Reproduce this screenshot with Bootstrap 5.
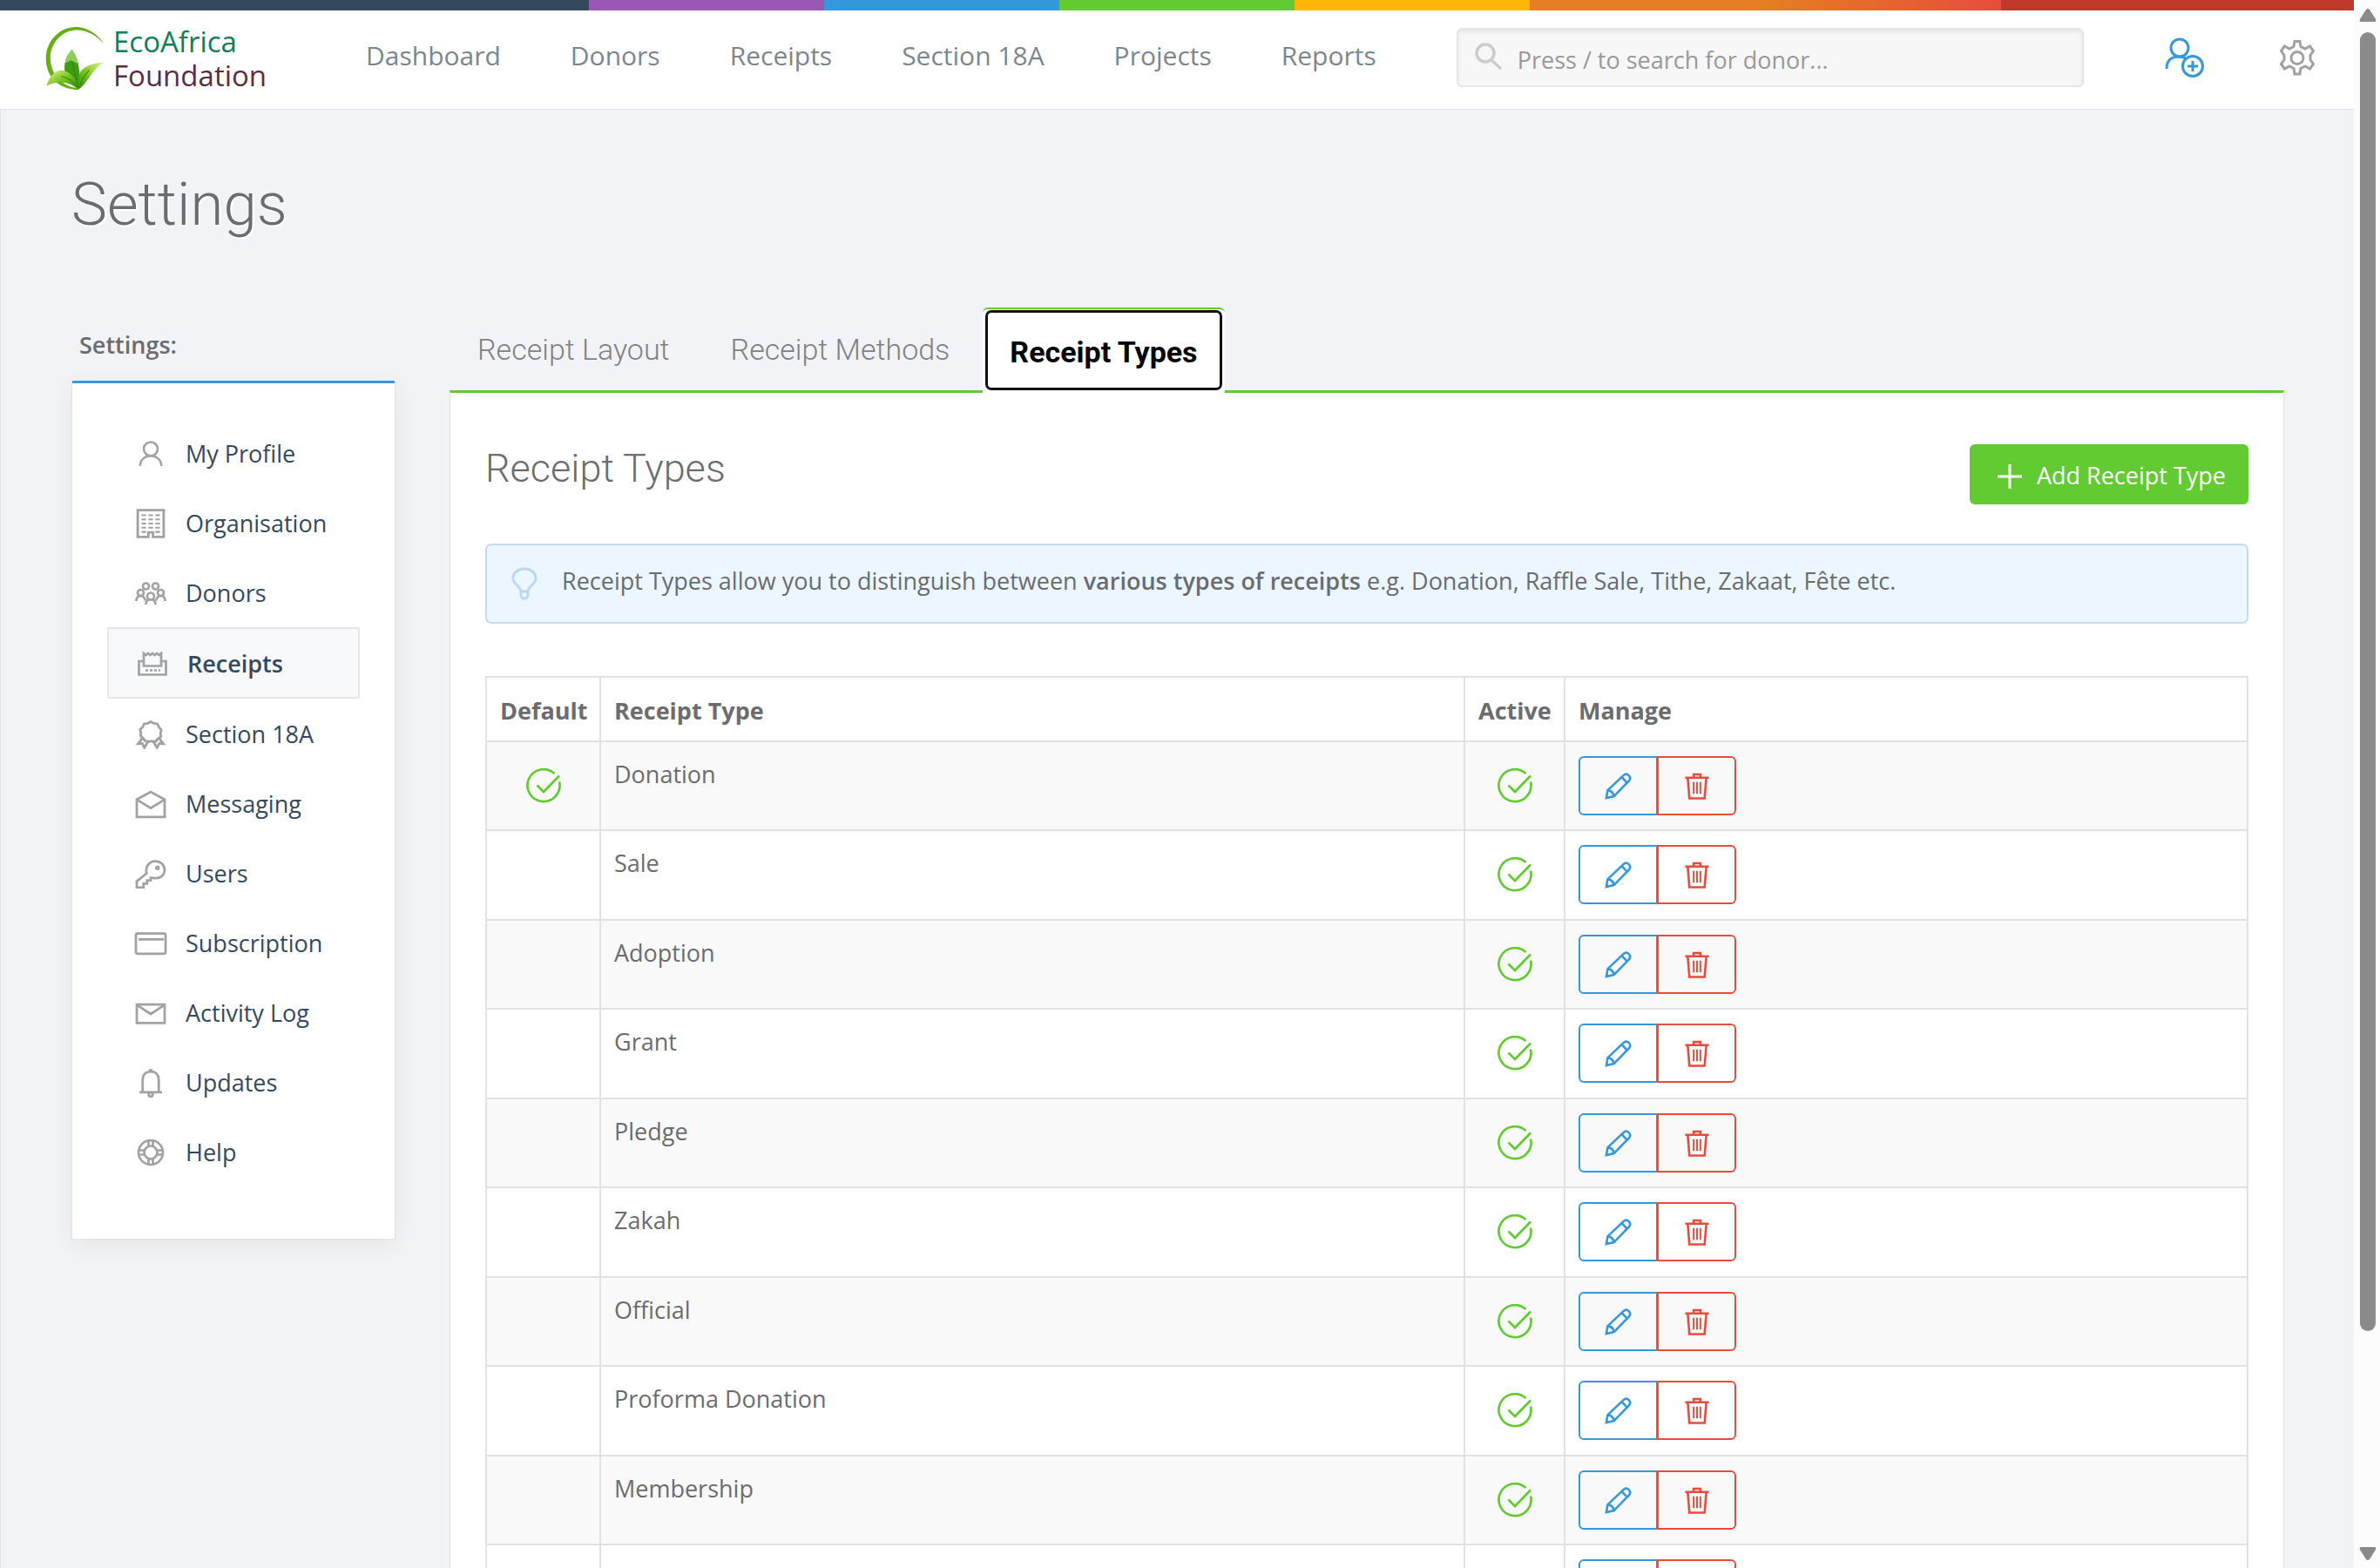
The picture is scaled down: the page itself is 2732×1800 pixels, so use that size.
<!DOCTYPE html>
<html lang="en">
<head>
<meta charset="utf-8">
<meta name="viewport" content="width=device-width, initial-scale=1">
<title>Settings - Receipt Types</title>
<link rel="stylesheet" href="https://cdn.jsdelivr.net/npm/bootstrap@5.3.0/dist/css/bootstrap.min.css">
<style>
:root{--ink:#6a6c6f;--navy:#34495e;--blue:#3498db;--green:#62cb31;--red:#e74c3c;--rule:#e3e4e5}
body{font-family:"Open Sans","Noto Sans",sans-serif;font-size:27px;line-height:40px;color:var(--ink);background:#f1f3f6}
.app{height:100vh;overflow:hidden;padding-right:30px}
.stripe{height:12px;background:linear-gradient(90deg,#34495e 25%,#9b59b6 25% 35%,#3498db 35% 45%,#62cb31 45% 55%,#ffb606 55% 65%,#e67e22 65% 75%,#e74c3c 85%,#c0392b 85%)}
.topbar{height:114px;background:#fff;border-bottom:1px solid #e1e2e3;padding:0 44px 0 52px}
.brand{font-size:33px;line-height:39px;color:#0d8058;width:328px;padding-top:16px;gap:10px}
.brand span{color:#5a2d45}
.brand svg{margin-top:2px}
.mainnav .nav-link{font-size:30px;line-height:40px;padding:32px 40px;color:#7c868f}
.finder{width:720px;height:68px;margin:20px 0 0 52px}
.finder .form-control{height:68px;font-size:27px;padding:4px 20px 0 68px;background:#f7f7f7;border:2px solid #e5e6e7;border-radius:6px;box-shadow:inset 0 3px 4px rgba(0,0,0,.07);color:var(--ink)}
.finder .form-control::placeholder{color:#999;opacity:1}
.finder svg{top:16px;left:20px}
.tools{gap:84px;padding-top:31px}
.page{border-left:1px solid #e1e3e6;padding:61px 80px 0 81px}
.page h1{font-family:Roboto,sans-serif;font-weight:300;font-size:69px;line-height:96px;margin-bottom:70px;text-shadow:2px 2px 0 #fff}
.cols{gap:62px}
.side{width:372px;flex:none;padding-top:23px}
.side h2{font-size:27px;line-height:40px;font-weight:600;margin:0 0 21px 9px}
.sidecard{background:#fff;border:1px solid var(--rule);border-top:3px solid var(--blue);border-radius:3px;padding:40px 40px 60px;box-shadow:0 6px 24px rgba(60,70,90,.07)}
.sidecard .nav-link{height:80px;padding:2px 0 0 31px;color:var(--navy);gap:21px}
.sidecard .nav-link.active{height:82px;border:2px solid #e5e6e7;background:#f7f9fa;font-weight:600;border-radius:2px}
.sidecard svg{color:#a2a2a2}
.tabs{gap:6px;position:relative;z-index:1;margin-bottom:-3px;height:98px}
.tabs .nav-link{font-family:Roboto,sans-serif;font-weight:300;font-size:34px;line-height:40px;color:#808184;padding:28px 32px}
.tabs .nav-link.active{color:#000;font-weight:700;background:#fff;border-top:2px solid var(--green);border-radius:6px 6px 0 0;padding:29px 31px;height:98px;position:relative}
.tabs .nav-link.active::after{content:"";position:absolute;inset:1px 3px 3px;border:3px solid #111;border-radius:7px}
.panel{background:#fff;border:1px solid #e4e5e7;border-top:3px solid var(--green);padding:59px 40px 80px}
.panel h2{font-family:Roboto,sans-serif;font-weight:300;font-size:45px;line-height:56px}
.addbtn{height:69px;font-size:27px;background:var(--green);color:#fff;border-radius:6px;padding:4px 25px 0 30px;gap:16px}
.note{margin:45px 0 60px;height:92px;background:#ebf6ff;border:2px solid #c5dbee;border-radius:7px;padding:0 24px 0 28px;gap:28px}
.note p{padding-bottom:6px}
.note strong{font-weight:600}
.types{table-layout:fixed;border:2px solid #e2e2e2;color:var(--ink);margin:0;--bs-table-color:var(--ink);--bs-table-striped-color:var(--ink);--bs-table-striped-bg:#f9f9f9;--bs-table-bg:#fff}
.types th,.types td{border:2px solid #e2e2e2;color:var(--ink);padding:16px 15px}
.types th{font-weight:700;padding:18px 15px 14px}
.types td{height:102px}
.types tr:nth-child(even) td{height:103px}
.types td:nth-child(2){padding-top:17px}
.types thead tr th:nth-child(1),.types td:nth-child(1),.types td:nth-child(3){text-align:center}
.types svg.tick{margin-top:14px;color:var(--green)}
.types .btn{width:91px;height:68px;border-radius:6px;border-width:2px;padding:0}
.c1{width:131px}.c3{width:115px}.c4{width:784px}
.btn-edit{--bs-btn-color:#3498db;--bs-btn-border-color:#3498db}
.btn-del{--bs-btn-color:#e74c3c;--bs-btn-border-color:#e74c3c}
svg{display:block;flex:none}
.ln{fill:none;stroke:currentColor;stroke-width:2.7}
.scroller{width:30px;background:#fcfcfc;padding:10px 5px 9px 6px}
.scroller i{width:18px;height:83.7%;margin:12px 0 auto;background:#8a8a8a;border-radius:9px}
</style>
<script src="https://cdn.jsdelivr.net/npm/bootstrap@5.3.0/dist/js/bootstrap.bundle.min.js"></script>
</head>
<body>
<svg class="d-none" aria-hidden="true">
  <symbol id="user" viewBox="0 0 32 32"><g class="ln"><circle cx="16" cy="10" r="8.500"/><path d="M3 31C3 23 9 18.500 16 18.500S29 23 29 31"/></g></symbol>
  <symbol id="building" viewBox="0 0 32 32"><g class="ln"><path d="M2 1.500h28v29H18.500v-5h-5v5H2z"/><path d="M6 7h5m2.500 0h5m2.500 0h5M6 11.500h5m2.500 0h5m2.500 0h5M6 16h5m2.500 0h5m2.500 0h5M6 20.500h5m2.500 0h5m2.500 0h5M6 25h5m10 0h5" stroke-width="2"/></g></symbol>
  <symbol id="group" viewBox="0 0 36 32"><g class="ln"><circle cx="12.500" cy="8" r="3.500"/><circle cx="23.500" cy="8" r="3.500"/><circle cx="6.500" cy="15.500" r="3.500"/><circle cx="29.500" cy="15.500" r="3.500"/><circle cx="18" cy="19.500" r="4"/><path d="M1.500 25c0-4 2-6 5-6s4.500 2 5.500 5.500M34.500 25c0-4-2-6-5-6s-4.500 2-5.500 5.500M12.500 29c0-4 2-6 5.500-6s5.500 2 5.500 6"/></g></symbol>
  <symbol id="printer" viewBox="0 0 34 32"><g class="ln"><path d="M7 13H1.500v15.500h31V13H27"/><path d="M7 18.500V4l2.500 2L12 4l2.500 2L17 4l2.500 2L22 4l2.500 2L27 4v14.500z"/><path d="M9 23.500h17" stroke-dasharray="3 2"/></g></symbol>
  <symbol id="ribbon" viewBox="0 0 32 32"><g class="ln"><path d="m16 1.500 3.500 1.700 4 .6 1.600 3.700 2.700 3-.9 3.800.4 4-3.300 2.200-2.500 3-4-.3-3.500.3-4-.6-2.500-3-2.700-2.600.3-3.700-.9-3.500L7 7.500l1.600-3.700 4-.6z"/><path d="m6.500 20-4.500 6 4.500-.4L9 30.500l4-7m12.500-3.500 4.500 6-4.500-.4-2.500 4.900-4-7"/></g></symbol>
  <symbol id="mailopen" viewBox="0 0 34 32"><g class="ln"><path d="M1.500 10.500 17 2l15.500 8.500v19.500h-31z"/><path d="M1.500 10.500 17 20l15.500-9.500"/></g></symbol>
  <symbol id="key" viewBox="0 0 34 32"><g class="ln"><path d="M12.500 15C10.500 7 16 1.500 22 1.500c6 0 10.500 4.500 10.500 10C32.500 18 26 22 19 20h-2v3h-4v3.500H9V31H1.500v-7z"/><circle cx="24.500" cy="9" r="1.300"/></g></symbol>
  <symbol id="cardpay" viewBox="0 0 36 32"><g class="ln"><rect x="1.500" y="4.500" width="33" height="22.500" rx="2"/><path d="M4.500 11h28"/></g></symbol>
  <symbol id="mail" viewBox="0 0 34 32"><g class="ln"><path d="M1.500 6h31v20.500h-31z"/><path d="m1.500 6.500 15.500 10 15.500-10"/></g></symbol>
  <symbol id="bell" viewBox="0 0 32 32"><g class="ln"><path d="M3.500 26h25M7 26V12.500C7 6.500 10.500 3 16 3s9 3.500 9 9.500V26"/><circle cx="16" cy="28.500" r="2.300"/><path d="M14 1.500h4"/></g></symbol>
  <symbol id="ring" viewBox="0 0 32 32"><g class="ln"><circle cx="16" cy="16" r="14"/><circle cx="16" cy="16" r="7.500"/><path d="M13.500 2v7m5-7v7m-5 14v7m5-7v7M2 13.500h7m-7 5h7m14-5h7m-7 5h7"/></g></symbol>
  <symbol id="tick" viewBox="0 0 40 40"><g class="ln"><path d="M32.500 6A18.500 18.500 0 1 0 38 15.500"/><path d="M12.500 19.500 20 27 38 8.500"/></g></symbol>
  <symbol id="pencil" viewBox="0 0 32 32"><g class="ln"><path d="m2 30 1.500-9L22.500 3c4-3.500 10 2 6.500 6.500L11 28z"/><path d="m20.500 5.500 6.500 7M4 21c4 .5 6.500 3 7 7"/></g></symbol>
  <symbol id="trash" viewBox="0 0 28 32"><g class="ln"><path d="M0 6h28M3 6l2 24.500h18L25 6M10 6V2h8v4"/><path d="M10 11v14m4-14v14m4-14v14" stroke-width="2"/></g></symbol>
</svg>

<div class="app">
  <div class="stripe"></div>
  <header class="topbar d-flex align-items-start">
    <a class="brand d-flex text-decoration-none" href="#">
      <svg width="68" height="75" viewBox="36 30 201 222" aria-hidden="true">
        <defs><linearGradient id="lf" x1="0" y1="0" x2="1" y2="1"><stop offset="0" stop-color="#e6f5a0"/><stop offset=".5" stop-color="#79c41c"/><stop offset="1" stop-color="#2f8a08"/></linearGradient>
        <linearGradient id="rf" x1="1" y1="0" x2="0" y2="1"><stop offset="0" stop-color="#e9f6a8"/><stop offset=".5" stop-color="#83cc1f"/><stop offset="1" stop-color="#2f8a08"/></linearGradient></defs>
        <path fill="#63b010" d="M235 90C205 45 165 33 140 33C85 33 38 80 38 140C38 200 80 246 150 246L150 240C100 238 55 200 53 140C52 90 90 45 140 43C175 42 210 60 235 90Z"/>
        <path fill="#3f9c12" d="M126 110C98 140 96 178 108 205L148 242C156 200 154 145 126 110Z"/>
        <path fill="#8fce5a" d="M126 110C112 126 105 140 103 156L124 146L147 158C144 138 136 122 126 110Z"/>
        <path fill="url(#rf)" d="M236 153C190 155 152 172 148 206L150 244C180 226 190 180 236 153Z"/>
        <path fill="url(#lf)" d="M40 233C52 190 80 174 100 182C128 190 142 215 148 244C122 222 80 210 40 233Z"/>
        <path fill="none" stroke="#2f8a08" stroke-width="3" d="M126 150Q140 200 149 240M185 180Q160 205 150 240M90 200Q130 210 148 240"/>
      </svg>
      <div>EcoAfrica<br><span>Foundation</span></div>
    </a>
    <nav class="mainnav nav flex-nowrap" aria-label="Main">
      <a class="nav-link" href="#">Dashboard</a><a class="nav-link" href="#">Donors</a><a class="nav-link" href="#">Receipts</a><a class="nav-link text-nowrap" href="#">Section 18A</a><a class="nav-link" href="#">Projects</a><a class="nav-link" href="#">Reports</a>
    </nav>
    <form class="finder position-relative">
      <input class="form-control" type="text" aria-label="Search for donor" placeholder="Press / to search for donor...">
      <svg class="position-absolute" width="34" height="34" viewBox="0 0 34 34" fill="none" stroke="#ccc" stroke-width="3.500" aria-hidden="true"><circle cx="13" cy="13" r="10"/><path d="m20 21 11 10"/></svg>
    </form>
    <div class="tools d-flex ms-auto">
      <a href="#" aria-label="Add donor"><svg width="48" height="48" viewBox="0 0 48 48" fill="none" stroke="#3498db" stroke-width="3"><circle cx="18" cy="12" r="10"/><path d="M3 36c0-9 5-14 14-14 4 0 6 1 8 2"/><circle cx="33" cy="33" r="11.500"/><path d="M33 27v12m-6-6h12"/></svg></a>
      <a href="#" aria-label="Settings"><svg width="42" height="48" viewBox="0 0 42 48" fill="none" stroke="#a0a1a3" stroke-width="3"><path d="M18 4.500h6l1 6 5 2.500 5.500-3 4 5.500-3.500 5v5l3.500 5-4 5.500-5.500-3-5 2.500-1 6.500h-6l-1-6.500-5-2.500-5.500 3-4-5.500L6 25.500v-5l-3.500-5 4-5.500 5.500 3 5-2.500z"/><circle cx="21" cy="23.500" r="7"/></svg></a>
    </div>
  </header>

  <main class="page">
    <h1>Settings</h1>
    <div class="cols d-flex align-items-start">
      <aside class="side">
        <h2>Settings:</h2>
        <nav class="sidecard nav flex-column flex-nowrap" aria-label="Settings">
          <a class="nav-link d-flex align-items-center" href="#"><svg width="38" height="30"><use href="#user"/></svg>My Profile</a>
          <a class="nav-link d-flex align-items-center" href="#"><svg width="38" height="34"><use href="#building"/></svg>Organisation</a>
          <a class="nav-link d-flex align-items-center" href="#"><svg width="38" height="32"><use href="#group"/></svg>Donors</a>
          <a class="nav-link active d-flex align-items-center" aria-current="page" href="#"><svg width="38" height="32"><use href="#printer"/></svg>Receipts</a>
          <a class="nav-link d-flex align-items-center" href="#"><svg width="38" height="33"><use href="#ribbon"/></svg>Section 18A</a>
          <a class="nav-link d-flex align-items-center" href="#"><svg width="38" height="33"><use href="#mailopen"/></svg>Messaging</a>
          <a class="nav-link d-flex align-items-center" href="#"><svg width="38" height="33"><use href="#key"/></svg>Users</a>
          <a class="nav-link d-flex align-items-center" href="#"><svg width="38" height="33"><use href="#cardpay"/></svg>Subscription</a>
          <a class="nav-link d-flex align-items-center" href="#"><svg width="38" height="33"><use href="#mail"/></svg>Activity Log</a>
          <a class="nav-link d-flex align-items-center" href="#"><svg width="38" height="33"><use href="#bell"/></svg>Updates</a>
          <a class="nav-link d-flex align-items-center" href="#"><svg width="38" height="32"><use href="#ring"/></svg>Help</a>
        </nav>
      </aside>

      <section class="flex-grow-1">
        <nav class="tabs nav flex-nowrap" aria-label="Receipt settings">
          <a class="nav-link" href="#">Receipt Layout</a>
          <a class="nav-link" href="#">Receipt Methods</a>
          <a class="nav-link active" aria-current="true" href="#">Receipt Types</a>
        </nav>
        <div class="panel">
          <div class="d-flex justify-content-between align-items-start">
            <h2 class="m-0">Receipt Types</h2>
            <button type="button" class="btn addbtn d-flex align-items-center"><svg width="30" height="30" viewBox="0 0 30 30" stroke="#fff" stroke-width="3" aria-hidden="true"><path d="M1 15h28M15 1v28"/></svg>Add Receipt Type</button>
          </div>
          <div class="note d-flex align-items-center">
            <svg width="30" height="38" viewBox="0 0 30 38" fill="none" stroke="#bdd8ee" stroke-width="3" aria-hidden="true"><path d="M11 28c0-6-9-8-9-15C2 6 8 2 15 2s13 4 13 11c0 7-9 9-9 15zM11 28v5l2 3h4l2-3v-5"/></svg>
            <p class="m-0">Receipt Types allow you to distinguish between <strong>various types of receipts</strong> e.g. Donation, Raffle Sale, Tithe, Zakaat, Fête etc.</p>
          </div>
          <table class="table table-striped types">
            <colgroup><col class="c1"><col><col class="c3"><col class="c4"></colgroup>
            <thead><tr><th scope="col">Default</th><th scope="col">Receipt Type</th><th scope="col">Active</th><th scope="col">Manage</th></tr></thead>
            <tbody id="rows"></tbody>
          </table>
        </div>
      </section>
    </div>
  </main>
</div>
<div class="scroller position-fixed top-0 end-0 h-100 d-flex flex-column align-items-center" aria-hidden="true">
  <svg width="20" height="15" viewBox="0 0 20 15" fill="#8a8a8a"><path d="M10 0q1 0 2 1l7 11q1 3-1 3H2q-2 0-1-3L8 1q1-1 2-1z"/></svg>
  <i></i>
  <svg width="20" height="15" viewBox="0 0 20 15" fill="#8a8a8a"><path d="M10 15q1 0 2-1l7-11q1-3-1-3H2Q0 0 1 3l7 11q1 1 2 1z"/></svg>
</div>
<script>
const types = ["Donation","Sale","Adoption","Grant","Pledge","Zakah","Official","Proforma Donation","Membership",""];
const tick = label => `<svg class="tick mx-auto" width="40" height="40" role="img" aria-label="${label}"><use href="#tick"/></svg>`;
document.getElementById("rows").innerHTML = types.map((name, i) => `<tr>
  <td>${i === 0 ? tick("Default") : ""}</td><td>${name}</td><td>${tick("Active")}</td>
  <td><div class="btn-group d-flex">
    <button type="button" class="btn btn-edit d-flex flex-grow-0 align-items-center justify-content-center" aria-label="Edit"><svg width="31" height="31"><use href="#pencil"/></svg></button>
    <button type="button" class="btn btn-del d-flex flex-grow-0 align-items-center justify-content-center" aria-label="Delete"><svg width="28" height="31"><use href="#trash"/></svg></button>
  </div></td></tr>`).join("");
</script>
</body>
</html>
